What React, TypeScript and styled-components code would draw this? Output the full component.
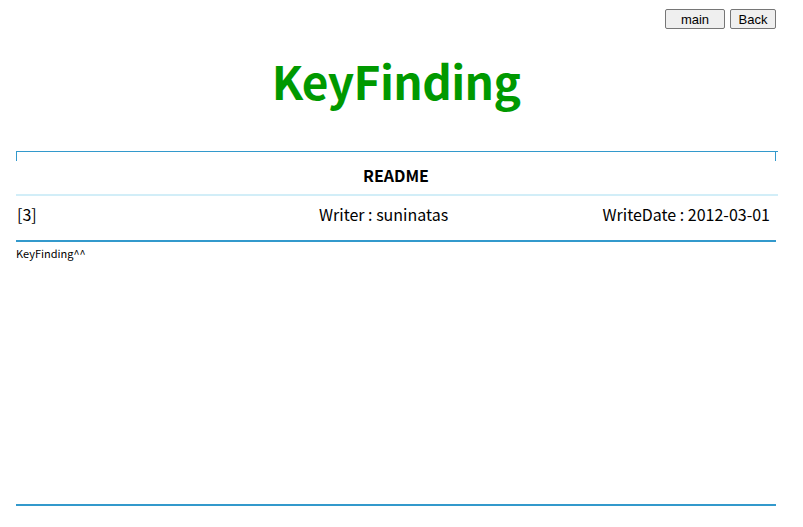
import styled, { createGlobalStyle } from "styled-components";

const GlobalStyle = createGlobalStyle`
  html, body {
    margin: 0;
    padding: 0;
    background: #ffffff;
  }
  body {
    font-family: "Noto Sans CJK KR", "Open Sans", sans-serif;
    color: #000000;
  }
`;

export default function App() {
  return (
    <>
      <GlobalStyle />
      <Page>
        <TopBar>
          <NavButton $width={60}>main</NavButton>
          <NavButton $width={46}>Back</NavButton>
        </TopBar>
        <Title>KeyFinding</Title>
        <Board>
          <BoardHead>README</BoardHead>
          <MetaRow>
            <MetaCell $align="left">[3]</MetaCell>
            <MetaCell $align="left">Writer : suninatas</MetaCell>
            <MetaCell $align="right">WriteDate : 2012-03-01</MetaCell>
          </MetaRow>
          <Body>KeyFinding^^</Body>
        </Board>
      </Page>
    </>
  );
}

const Page = styled.div`
  width: 803px;
  padding: 9px 27px 0 16px;
  box-sizing: border-box;
`;

const TopBar = styled.div`
  display: flex;
  justify-content: flex-end;
  gap: 5px;
`;

const NavButton = styled.button<{ $width: number }>`
  width: ${(p) => p.$width}px;
  height: 20px;
  padding: 0;
  font-family: "Liberation Sans", Arial, sans-serif;
  font-size: 13px;
  color: #000;
  background: #efefef;
  border: 1px solid #767676;
  border-radius: 2px;
`;

const Title = styled.h1`
  margin: 15px 0 0;
  height: 107px;
  line-height: 72px;
  text-align: center;
  font-size: 46px;
  font-weight: 700;
  color: #009900;
  letter-spacing: -0.6px;
`;

const Board = styled.div`
  width: 760px;
`;

const BoardHead = styled.div`
  height: 45px;
  box-sizing: border-box;
  padding: 4px 2px 0 0;
  border-top: 1px solid #3399cc;
  position: relative;
  display: flex;
  align-items: center;
  justify-content: center;
  font-size: 16px;
  font-weight: 700;
  border-bottom: 2px solid #d2eef8;
  margin-right: -2px;

  &::before,
  &::after {
    content: "";
    position: absolute;
    top: 0;
    width: 1px;
    height: 9px;
    background: #3399cc;
  }
  &::before {
    left: 0;
  }
  &::after {
    right: 2px;
  }
`;

const MetaRow = styled.div`
  height: 46px;
  box-sizing: border-box;
  padding: 0 6px 8px 1px;
  display: grid;
  grid-template-columns: 302px 1fr auto;
  align-items: center;
  border-bottom: 2px solid #3399cc;
  font-size: 16px;
`;

const MetaCell = styled.div<{ $align: "left" | "right" }>`
  text-align: ${(p) => p.$align};
`;

const Body = styled.div`
  height: 264px;
  padding-top: 3px;
  box-sizing: border-box;
  font-size: 11px;
  border-bottom: 2px solid #3399cc;
`;
